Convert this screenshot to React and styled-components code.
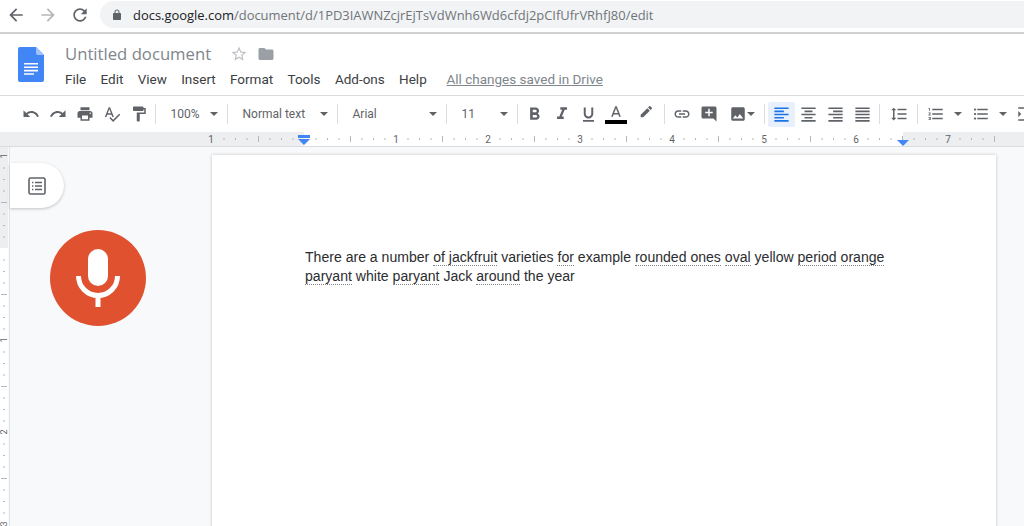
import React from 'react';
import styled, { createGlobalStyle } from 'styled-components';

const Global = createGlobalStyle`
  html, body {
    margin: 0;
    padding: 0;
    background: #f8f9fa;
  }
  #root {
    height: 526px;
    overflow: hidden;
  }
`;

const Screen = styled.div`
  display: flex;
  flex-direction: column;
  width: 1024px;
  height: 526px;
  overflow: hidden;
  font-family: Roboto, "Liberation Sans", sans-serif;
`;

const BrowserBar = styled.div`
  display: flex;
  align-items: center;
  flex-shrink: 0;
  box-sizing: border-box;
  height: 34px;
  padding: 0 0 3px 0;
  background: #fff;
  border-bottom: 2px solid #cfd1d3;
`;

const NavButton = styled.div`
  display: flex;
  align-items: center;
  justify-content: center;
  width: 32px;
  height: 24px;
  color: ${p => (p.$off ? '#b4b7ba' : '#5f6368')};
`;

const Omnibox = styled.div`
  display: flex;
  align-items: center;
  flex: 1;
  height: 27px;
  margin-left: 4px;
  padding-left: 11px;
  background: #f1f3f4;
  border-radius: 14px 0 0 14px;
  font-family: "Open Sans", sans-serif;
  font-size: 12.95px;
  color: #70757a;
  white-space: nowrap;
`;

const Host = styled.span`
  margin-left: 10px;
  color: #202124;
`;

const DocHeader = styled.div`
  display: flex;
  flex-shrink: 0;
  height: 62px;
  box-sizing: border-box;
  padding: 13px 0 0 18px;
  background: #fff;
  border-bottom: 1px solid #dadce0;
`;

const HeaderText = styled.div`
  display: flex;
  flex-direction: column;
  margin: -2px 0 0 21px;
`;

const TitleRow = styled.div`
  display: flex;
  align-items: center;
  height: 17px;
`;

const Title = styled.span`
  width: 165px;
  font-family: "Open Sans", sans-serif;
  font-size: 16.7px;
  color: #80868b;
  white-space: nowrap;
`;

const MenuRow = styled.div`
  display: flex;
  align-items: center;
  margin-top: 9px;
  font-size: 13.5px;
  color: #3c4043;
  white-space: nowrap;
`;

const MenuItem = styled.span`
  margin-right: 14.3px;
`;

const SavedNote = styled.span`
  margin-left: 5.5px;
  color: #80868b;
  text-decoration: underline;
`;

const Toolbar = styled.div`
  display: flex;
  align-items: center;
  flex-shrink: 0;
  height: 36px;
  padding-left: 17px;
  background: #fff;
  overflow: hidden;
`;

const ToolButton = styled.div`
  display: flex;
  align-items: center;
  justify-content: center;
  flex-shrink: 0;
  width: ${p => p.$w || 27}px;
  height: 25px;
  border-radius: 2px;
  color: #5f6368;
  background: ${p => (p.$active ? '#e8f0fe' : 'transparent')};
`;

const ToolSep = styled.div`
  flex-shrink: 0;
  width: 1px;
  height: 20px;
  margin: 0 3px;
  background: #dadce0;
`;

const ToolSelect = styled.div`
  display: flex;
  align-items: center;
  justify-content: space-between;
  flex-shrink: 0;
  box-sizing: border-box;
  width: ${p => p.$w}px;
  padding: 0 6px 0 11.5px;
  font-size: 12px;
  color: #5f6368;
`;

const Caret = styled.i`
  flex-shrink: 0;
  width: 0;
  height: 0;
  border-left: 4px solid transparent;
  border-right: 4px solid transparent;
  border-top: 4px solid #5f6368;
`;

const ColorA = styled.div`
  display: flex;
  flex-direction: column;
  align-items: center;
`;

const ColorBar = styled.div`
  width: 22px;
  height: 4px;
  margin-top: -2px;
  background: #000;
`;

const RulerBar = styled.div`
  flex-shrink: 0;
  height: 15px;
  line-height: 0;
  border-bottom: 1px solid #dadce0;
  box-sizing: border-box;
`;

const Workspace = styled.div`
  display: flex;
  flex: 1;
  min-height: 0;
  background: #f8f9fa;
`;

const SideRuler = styled.div`
  flex-shrink: 0;
  width: 9px;
  line-height: 0;
  border-right: 1px solid #e3e5e8;
`;

const LeftRail = styled.div`
  display: flex;
  flex-direction: column;
  flex-shrink: 0;
  width: 202px;
`;

const OutlinePill = styled.div`
  display: flex;
  align-items: center;
  justify-content: center;
  box-sizing: border-box;
  width: 54px;
  height: 45px;
  margin-top: 16px;
  background: #fff;
  border-radius: 0 23px 23px 0;
  box-shadow: 0 1px 3px rgba(60, 64, 67, 0.3);
  color: #5f6368;
`;

const MicBall = styled.div`
  display: flex;
  align-items: center;
  justify-content: center;
  width: 96px;
  height: 96px;
  margin: 22px 0 0 40px;
  border-radius: 50%;
  background: #e0512f;
`;

const Page = styled.div`
  flex-shrink: 0;
  align-self: flex-start;
  box-sizing: border-box;
  width: 784px;
  height: 500px;
  margin-top: 8px;
  padding: 93px 100px 0 93px;
  background: #fff;
  box-shadow: 0 0 3px rgba(60, 64, 67, 0.3);
  font-family: "Liberation Sans", Arial, sans-serif;
  font-size: 14.07px;
  line-height: 19px;
  color: #2b2d30;
`;

const Flagged = styled.span`
  border-bottom: 1px dotted #80868b;
`;

const Icon = ({ d, size = 18, color }) => (
  <svg width={size} height={size} viewBox="0 0 24 24" fill={color || 'currentColor'}>
    <path d={d} />
  </svg>
);

const paths = {
  undo: 'M12.5 8c-2.65 0-5.05.99-6.9 2.6L2 7v9h9l-3.62-3.62c1.39-1.16 3.16-1.88 5.12-1.88 3.54 0 6.55 2.31 7.6 5.5l2.37-.78C21.08 11.03 17.15 8 12.5 8z',
  redo: 'M18.4 10.6C16.55 8.99 14.15 8 11.5 8c-4.65 0-8.58 3.03-9.96 7.22L3.9 16c1.05-3.19 4.05-5.5 7.6-5.5 1.95 0 3.73.72 5.12 1.88L13 16h9V7l-3.6 3.6z',
  print: 'M19 8H5c-1.66 0-3 1.34-3 3v6h4v4h12v-4h4v-6c0-1.66-1.34-3-3-3zm-3 11H8v-5h8v5zm3-7c-.55 0-1-.45-1-1s.45-1 1-1 1 .45 1 1-.45 1-1 1zm-1-9H6v4h12V3z',
  spell: 'M12.45 16h2.09L9.43 3H7.57L2.46 16h2.09l1.12-3h5.64l1.14 3zm-6.02-5L8.5 5.48 10.57 11H6.43zm15.16.59l-8.09 8.09L9.83 16l-1.41 1.41 5.09 5.09L23 13l-1.41-1.41z',
  paint: 'M18 4V3c0-.55-.45-1-1-1H5c-.55 0-1 .45-1 1v4c0 .55.45 1 1 1h12c.55 0 1-.45 1-1V6h1v4H9v11c0 .55.45 1 1 1h2c.55 0 1-.45 1-1v-9h8V4h-3z',
  bold: 'M15.6 10.79c.97-.67 1.65-1.77 1.65-2.79 0-2.26-1.75-4-4-4H7v14h7.04c2.09 0 3.71-1.7 3.71-3.79 0-1.52-.86-2.82-2.15-3.42zM10 6.5h3c.83 0 1.5.67 1.5 1.5s-.67 1.5-1.5 1.5h-3v-3zm3.5 9H10v-3h3.5c.83 0 1.5.67 1.5 1.5s-.67 1.5-1.5 1.5z',
  italic: 'M10 4v3h2.21l-3.42 8H6v3h8v-3h-2.21l3.42-8H18V4z',
  underline: 'M12 17c3.31 0 6-2.69 6-6V3h-2.5v8c0 1.93-1.57 3.5-3.5 3.5S8.5 12.93 8.5 11V3H6v8c0 3.31 2.69 6 6 6zm-7 2v2h14v-2H5z',
  colorA: 'M11 3L5.5 17h2.25l1.12-3h6.25l1.12 3h2.25L13 3h-2zm-1.38 9L12 5.67 14.38 12H9.62z',
  marker: 'M17.75 7L14 3.25l-10 10V17h3.75l10-10zm2.96-2.96c.39-.39.39-1.02 0-1.41L18.37.29c-.39-.39-1.02-.39-1.41 0L15 2.25 18.75 6l1.96-1.96z',
  link: 'M3.9 12c0-1.71 1.39-3.1 3.1-3.1h4V7H7c-2.76 0-5 2.24-5 5s2.24 5 5 5h4v-1.9H7c-1.71 0-3.1-1.39-3.1-3.1zM8 13h8v-2H8v2zm9-6h-4v1.9h4c1.71 0 3.1 1.39 3.1 3.1s-1.39 3.1-3.1 3.1h-4V17h4c2.76 0 5-2.24 5-5s-2.24-5-5-5z',
  comment: 'M21.99 4c0-1.1-.89-2-1.99-2H4c-1.1 0-2 .9-2 2v12c0 1.1.9 2 2 2h14l4 4-.01-18zM17 11h-4v4h-2v-4H7V9h4V5h2v4h4v2z',
  image: 'M21 19V5c0-1.1-.9-2-2-2H5c-1.1 0-2 .9-2 2v14c0 1.1.9 2 2 2h14c1.1 0 2-.9 2-2zM8.5 13.5l2.5 3.01L14.5 12l4.5 6H5l3.5-4.5z',
  left: 'M15 15H3v2h12v-2zm0-8H3v2h12V7zM3 13h18v-2H3v2zm0 8h18v-2H3v2zM3 3v2h18V3H3z',
  center: 'M7 15v2h10v-2H7zm-4 6h18v-2H3v2zm0-8h18v-2H3v2zm4-6v2h10V7H7zM3 3v2h18V3H3z',
  right: 'M3 21h18v-2H3v2zm6-4h12v-2H9v2zm-6-4h18v-2H3v2zm6-4h12V7H9v2zM3 3v2h18V3H3z',
  justify: 'M3 21h18v-2H3v2zm0-4h18v-2H3v2zm0-4h18v-2H3v2zm0-4h18V7H3v2zm0-6v2h18V3H3z',
  spacing: 'M6 7h2.5L5 3.5 1.5 7H4v10H1.5L5 20.5 8.5 17H6V7zm4-2v2h12V5H10zm0 14h12v-2H10v2zm0-6h12v-2H10v2z',
  numbered: 'M2 17h2v.5H3v1h1v.5H2v1h3v-4H2v1zm1-9h1V4H2v1h1v3zm-1 3h1.8L2 13.1v.9h3v-1H3.2L5 10.9V10H2v1zm5-6v2h14V5H7zm0 14h14v-2H7v2zm0-6h14v-2H7v2z',
  bullets: 'M4 10.5c-.83 0-1.5.67-1.5 1.5s.67 1.5 1.5 1.5 1.5-.67 1.5-1.5-.67-1.5-1.5-1.5zm0-6c-.83 0-1.5.67-1.5 1.5S3.17 7.5 4 7.5 5.5 6.83 5.5 6 4.83 4.5 4 4.5zm0 12c-.83 0-1.5.68-1.5 1.5s.68 1.5 1.5 1.5 1.5-.68 1.5-1.5-.67-1.5-1.5-1.5zM7 19h14v-2H7v2zm0-6h14v-2H7v2zm0-8v2h14V5H7z',
  indent: 'M3 21h18v-2H3v2zM3 8v8l4-4-4-4zm8 9h10v-2H11v2zM3 3v2h18V3H3zm8 6h10V7H11v2zm0 4h10v-2H11v2z',
  back: 'M20 11H7.83l5.59-5.59L12 4l-8 8 8 8 1.41-1.41L7.83 13H20v-2z',
  forward: 'M12 4l-1.41 1.41L16.17 11H4v2h12.17l-5.58 5.59L12 20l8-8z',
  reload: 'M17.65 6.35C16.2 4.9 14.21 4 12 4c-4.42 0-7.99 3.58-7.99 8s3.57 8 7.99 8c3.73 0 6.84-2.55 7.73-6h-2.08c-.82 2.33-3.04 4-5.65 4-3.31 0-6-2.69-6-6s2.69-6 6-6c1.66 0 3.14.69 4.22 1.78L13 11h7V4l-2.35 2.35z',
  lock: 'M18 8h-1V6c0-2.76-2.24-5-5-5S7 3.24 7 6v2H6c-1.1 0-2 .9-2 2v10c0 1.1.9 2 2 2h12c1.1 0 2-.9 2-2V10c0-1.1-.9-2-2-2zM9 6c0-1.66 1.34-3 3-3s3 1.34 3 3v2H9V6z',
  star: 'M22 9.24l-7.19-.62L12 2 9.19 8.63 2 9.24l5.46 4.73L5.82 21 12 17.27 18.18 21l-1.63-7.03L22 9.24zM12 15.4l-3.76 2.27 1-4.28-3.32-2.88 4.38-.38L12 6.1l1.71 4.04 4.38.38-3.32 2.88 1 4.28L12 15.4z',
  folder: 'M10 4H4c-1.1 0-2 .9-2 2v12c0 1.1.9 2 2 2h16c1.1 0 2-.9 2-2V8c0-1.1-.9-2-2-2h-8l-2-2z'
};

const DocsLogo = () => (
  <svg width="26" height="35" viewBox="0 0 26 35">
    <path d="M2 0h16l8 8v25a2 2 0 0 1-2 2H2a2 2 0 0 1-2-2V2a2 2 0 0 1 2-2z" fill="#4285f4" />
    <path d="M18 0l8 8h-6a2 2 0 0 1-2-2z" fill="#a1c2fa" />
    <path d="M6 16h14v1.6H6zM6 19.4h14V21H6zM6 22.8h14v1.6H6zM6 26.2h10v1.6H6z" fill="#fff" />
  </svg>
);

const Mic = () => (
  <svg width="44" height="58" viewBox="0 0 44 58">
    <rect x="12" y="0" width="20" height="37" rx="10" fill="#fff" />
    <path d="M2.5 27c0 11 9 19.5 19.5 19.5S41.5 38 41.5 27" fill="none" stroke="#fff" strokeWidth="5" />
    <rect x="19.5" y="46" width="5" height="12" fill="#fff" />
  </svg>
);

const OutlineIcon = () => (
  <svg width="18" height="18" viewBox="0 0 18 18" fill="none" stroke="currentColor">
    <rect x="1" y="1" width="16" height="16" rx="1.5" strokeWidth="1.6" />
    <path d="M4 5.5h1.4M7 5.5h7M4 9h1.4M7 9h7M4 12.5h1.4M7 12.5h7" strokeWidth="1.6" />
  </svg>
);

const INCH = 92;
const ZERO = 304;

const TopRuler = () => {
  const ticks = [];
  for (let i = -7; i <= 60; i++) {
    const x = ZERO + (i * INCH) / 8;
    if (x > 996 || i % 8 === 0) continue;
    ticks.push(
      <rect key={i} x={x} y={i % 4 === 0 ? 4 : 6} width="1" height={i % 4 === 0 ? 6 : 2} fill="#b4b7bb" />
    );
  }
  return (
    <svg width="1024" height="14">
      <rect width="1024" height="14" fill="#eceef0" />
      <rect x={ZERO} width={903 - ZERO} height="14" fill="#fff" />
      {ticks}
      <g fontFamily="Roboto, sans-serif" fontSize="10" fill="#5f6368" textAnchor="middle">
        <text x="211" y="11">1</text>
        {[1, 2, 3, 4, 5, 6, 7].map(n => (
          <text key={n} x={ZERO + n * INCH} y="11">{n}</text>
        ))}
      </g>
      <path d="M298 3h12v3h-12zM298 7h12l-6 6z" fill="#4285f4" />
      <path d="M897 8h12l-6 6z" fill="#4285f4" />
    </svg>
  );
};

const LeftRuler = () => {
  const ticks = [];
  for (let i = -8; i < 30; i++) {
    const y = 101 + (i * INCH) / 8;
    if (i % 8 === 0 || y < 0) continue;
    ticks.push(<rect key={i} x={i % 4 === 0 ? 1 : 3} y={y} width={i % 4 === 0 ? 6 : 2} height="1" fill="#b4b7bb" />);
  }
  return (
    <svg width="8" height="380">
      <rect width="8" height="101" fill="#eceef0" />
      <rect y="101" width="8" height="279" fill="#fff" />
      {ticks}
      <g fontFamily="Roboto, sans-serif" fontSize="9" fill="#5f6368" textAnchor="middle">
        {[1, 2, 3].map(n => (
          <text key={n} x="4" y={101 + n * INCH} transform={`rotate(-90 4 ${101 + n * INCH})`} dy="3">{n}</text>
        ))}
        <text x="4" y="9" transform="rotate(-90 4 9)" dy="3">1</text>
      </g>
    </svg>
  );
};

const menus = ['File', 'Edit', 'View', 'Insert', 'Format', 'Tools', 'Add-ons', 'Help'];

const App = () => (
  <Screen>
    <Global />
    <BrowserBar>
      <NavButton><Icon d={paths.back} size={20} /></NavButton>
      <NavButton $off><Icon d={paths.forward} size={20} /></NavButton>
      <NavButton><Icon d={paths.reload} size={20} /></NavButton>
      <Omnibox>
        <Icon d={paths.lock} size={12} color="#5f6368" />
        <Host>docs.google.com</Host>/document/d/1PD3IAWNZcjrEjTsVdWnh6Wd6cfdj2pCIfUfrVRhfJ80/edit
      </Omnibox>
    </BrowserBar>

    <DocHeader>
      <DocsLogo />
      <HeaderText>
        <TitleRow>
          <Title>Untitled document</Title>
          <Icon d={paths.star} size={18} color="#bdc1c6" />
          <ToolButton $w={36}><Icon d={paths.folder} size={18} color="#9aa0a6" /></ToolButton>
        </TitleRow>
        <MenuRow>
          {menus.map(m => <MenuItem key={m}>{m}</MenuItem>)}
          <SavedNote>All changes saved in Drive</SavedNote>
        </MenuRow>
      </HeaderText>
    </DocHeader>

    <Toolbar>
      <ToolButton><Icon d={paths.undo} /></ToolButton>
      <ToolButton><Icon d={paths.redo} /></ToolButton>
      <ToolButton><Icon d={paths.print} /></ToolButton>
      <ToolButton><Icon d={paths.spell} /></ToolButton>
      <ToolButton><Icon d={paths.paint} /></ToolButton>
      <ToolSep />
      <ToolSelect $w={65}>100%<Caret /></ToolSelect>
      <ToolSep />
      <ToolSelect $w={103}>Normal text<Caret /></ToolSelect>
      <ToolSep />
      <ToolSelect $w={102}>Arial<Caret /></ToolSelect>
      <ToolSep />
      <ToolSelect $w={64}>11<Caret /></ToolSelect>
      <ToolSep />
      <ToolButton><Icon d={paths.bold} size={21} /></ToolButton>
      <ToolButton><Icon d={paths.italic} size={20} /></ToolButton>
      <ToolButton><Icon d={paths.underline} size={19} /></ToolButton>
      <ToolButton $w={28}>
        <ColorA>
          <Icon d={paths.colorA} />
          <ColorBar />
        </ColorA>
      </ToolButton>
      <ToolButton $w={31}><Icon d={paths.marker} size={16} /></ToolButton>
      <ToolSep />
      <ToolButton $w={28}><Icon d={paths.link} /></ToolButton>
      <ToolButton $w={26}><Icon d={paths.comment} /></ToolButton>
      <ToolButton $w={39}>
        <Icon d={paths.image} />
        <Caret />
      </ToolButton>
      <ToolSep />
      <ToolButton $active><Icon d={paths.left} size={19} color="#1a73e8" /></ToolButton>
      <ToolButton><Icon d={paths.center} size={19} /></ToolButton>
      <ToolButton><Icon d={paths.right} size={19} /></ToolButton>
      <ToolButton><Icon d={paths.justify} size={19} /></ToolButton>
      <ToolSep />
      <ToolButton $w={31}><Icon d={paths.spacing} /></ToolButton>
      <ToolSep />
      <ToolButton $w={30}><Icon d={paths.numbered} /></ToolButton>
      <ToolButton $w={13}><Caret /></ToolButton>
      <ToolButton $w={34}><Icon d={paths.bullets} /></ToolButton>
      <ToolButton $w={9}><Caret /></ToolButton>
      <ToolButton $w={36}><Icon d={paths.indent} /></ToolButton>
    </Toolbar>

    <RulerBar><TopRuler /></RulerBar>

    <Workspace>
      <SideRuler><LeftRuler /></SideRuler>
      <LeftRail>
        <OutlinePill><OutlineIcon /></OutlinePill>
        <MicBall><Mic /></MicBall>
      </LeftRail>
      <Page>
        There are a number <Flagged>of jackfruit</Flagged> varieties <Flagged>for</Flagged> example{' '}
        <Flagged>rounded ones</Flagged> <Flagged>oval</Flagged> yellow <Flagged>period</Flagged>{' '}
        <Flagged>orange</Flagged> <Flagged>paryant</Flagged> white <Flagged>paryant</Flagged> Jack{' '}
        <Flagged>around</Flagged> the year
      </Page>
    </Workspace>
  </Screen>
);

export default App;
